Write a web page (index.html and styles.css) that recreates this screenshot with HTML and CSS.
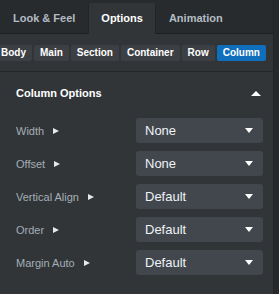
FILE: index.html
```html
<!DOCTYPE html>
<html lang="en">
<head>
    <meta charset="UTF-8">
    <meta name="viewport" content="width=device-width, initial-scale=1.0">
    <title>Column Options</title>
    <link rel="stylesheet" href="styles.css">
</head>
<body>
    <div class="panel">
        <ul class="tabs">
            <li class="tab">Look &amp; Feel</li>
            <li class="tab active">Options</li>
            <li class="tab">Animation</li>
        </ul>

        <div class="crumbs">
            <div class="crumb-list">
                <span class="crumb">Body</span>
                <span class="crumb">Main</span>
                <span class="crumb">Section</span>
                <span class="crumb">Container</span>
                <span class="crumb">Row</span>
                <span class="crumb current">Column</span>
            </div>
        </div>

        <section class="group">
            <div class="group-head">
                <h3>Column Options</h3>
                <span class="caret-up"></span>
            </div>
            <div class="fields">
                <div class="field">
                    <label class="field-label">Width</label>
                    <div class="select">None</div>
                </div>
                <div class="field">
                    <label class="field-label">Offset</label>
                    <div class="select">None</div>
                </div>
                <div class="field">
                    <label class="field-label">Vertical Align</label>
                    <div class="select">Default</div>
                </div>
                <div class="field">
                    <label class="field-label">Order</label>
                    <div class="select">Default</div>
                </div>
                <div class="field">
                    <label class="field-label">Margin Auto</label>
                    <div class="select">Default</div>
                </div>
            </div>
        </section>
    </div>
</body>
</html>
```

FILE: styles.css
```css
body {
    margin: 0;
    background-color: #26292b;
    font-family: 'Liberation Sans', Arial, sans-serif;
    color: #fff;
}
.panel {
    width: 273px;
    min-height: 294px;
    background-color: #313538;
    border-right: 1px solid #222527;
}
.tabs {
    list-style: none;
    margin: 0;
    padding: 3px 0 0;
    display: flex;
    align-items: flex-start;
    height: 30px;
    background-color: #282b2e;
    border-bottom: 1px solid #1d2022;
}
.tab {
    height: 30px;
    line-height: 30px;
    padding: 0 13px;
    font-size: 11px;
    font-weight: bold;
    color: #b3bcc3;
}
.tab.active {
    height: 31px;
    padding: 0 12px;
    color: #fff;
    background-color: #313538;
    border-left: 1px solid #222527;
    border-right: 1px solid #222527;
    border-radius: 2px 2px 0 0;
}
.crumbs {
    overflow: hidden;
    padding: 11px 0 10px;
}
.crumb-list {
    display: flex;
    gap: 2px;
    margin-left: -5px;
    white-space: nowrap;
}
.crumb {
    height: 16px;
    line-height: 16px;
    padding: 0 6px;
    font-size: 10px;
    font-weight: bold;
    color: #fff;
    background-color: #3c4044;
    border-radius: 2px;
}
.crumb.current {
    background-color: #0f6fbd;
}
.group {
    border-top: 1px solid #25282b;
    padding: 9px 10px 20px 16px;
}
.group-head {
    display: flex;
    justify-content: space-between;
    align-items: center;
    height: 24px;
    margin-bottom: 13px;
}
.group-head h3 {
    margin: 0;
    font-size: 11px;
    font-weight: bold;
}
.caret-up {
    width: 0;
    height: 0;
    margin-right: 2px;
    border-left: 5px solid transparent;
    border-right: 5px solid transparent;
    border-bottom: 5px solid #fff;
}
.fields {
    display: flex;
    flex-direction: column;
    gap: 8px;
}
.field {
    display: grid;
    grid-template-columns: 120px 1fr;
    align-items: center;
    height: 25px;
}
.field-label {
    display: flex;
    align-items: center;
    font-size: 11px;
    color: #a4aeb6;
}
.field-label::after {
    content: '';
    margin-left: 9px;
    border-top: 3.5px solid transparent;
    border-bottom: 3.5px solid transparent;
    border-left: 6px solid #e6e8ea;
}
.select {
    display: flex;
    justify-content: space-between;
    align-items: center;
    height: 25px;
    padding: 0 10px 0 9px;
    font-size: 13px;
    color: #eef3f6;
    background-color: #42464d;
    border-radius: 3px;
}
.select::after {
    content: '';
    border-left: 4px solid transparent;
    border-right: 4px solid transparent;
    border-top: 5px solid #fff;
}
```
